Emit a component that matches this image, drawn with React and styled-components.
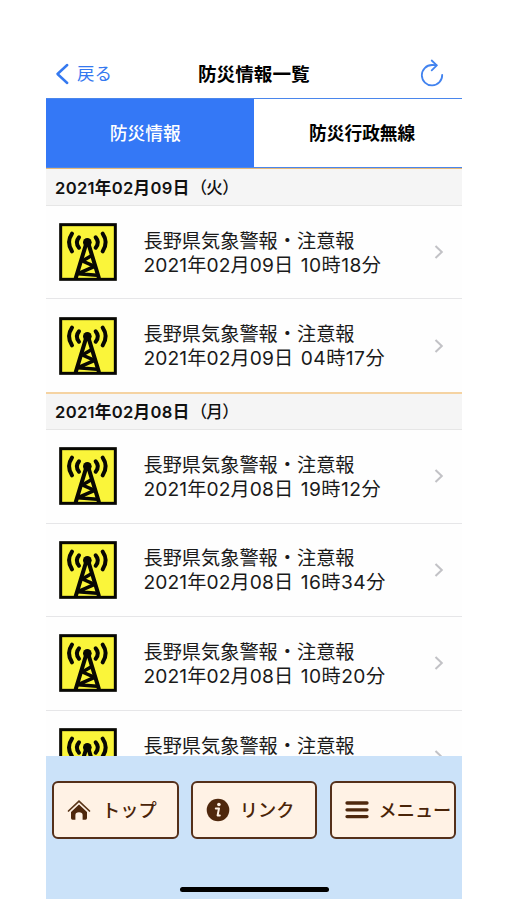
import React from "react";
import styled, { createGlobalStyle, css } from "styled-components";

const GlobalStyle = createGlobalStyle`
  * { box-sizing: border-box; }
  body {
    margin: 0;
    background: #fff;
    font-family: Inter, "Noto Sans CJK JP", sans-serif;
    color: #111;
  }
`;

const Screen = styled.div`
  width: 416px;
  height: 899px;
  margin-left: 46px;
  padding-top: 49px;
  display: flex;
  flex-direction: column;
  overflow: hidden;
  white-space: nowrap;
`;

const NavBar = styled.header`
  flex: none;
  height: 49px;
  padding: 0 18px 0 9px;
  display: grid;
  grid-template-columns: 143px auto 1fr;
  align-items: center;
`;

const BackButton = styled.a`
  display: flex;
  align-items: center;
  gap: 7px;
  color: #3579f0;
  font-size: 17.5px;
  line-height: 24px;
`;

const Title = styled.h1`
  margin: 0;
  font-size: 18.6px;
  line-height: 24px;
  font-weight: 700;
  color: #000;
`;

const ReloadButton = styled.a`
  display: flex;
  justify-content: flex-end;
  padding-bottom: 2px;
`;

const Tabs = styled.nav`
  flex: none;
  height: 70px;
  display: flex;
  border: solid #4a86ec;
  border-width: 1px 0;
`;

const Tab = styled.a`
  width: ${(p) => (p.$active ? 208.4 : 207.6)}px;
  display: flex;
  align-items: center;
  justify-content: center;
  padding-right: ${(p) => (p.$active ? 10 : 0)}px;
  padding-left: ${(p) => (p.$active ? 0 : 8)}px;
  padding-bottom: 2px;
  font-size: 17.7px;
  font-weight: 700;
  ${(p) =>
    p.$active
      ? css`
          background: #3478f6;
          color: #fff;
          font-weight: 500;
        `
      : css`
          color: #000;
        `}
`;

const List = styled.main`
  flex: 1;
  min-height: 0;
  overflow: hidden;
`;

const DayHeading = styled.h2`
  margin: 0;
  height: 38px;
  padding: 0 0 1px 9px;
  display: flex;
  align-items: center;
  border-top: ${(p) => (p.$first ? 1 : 2)}px solid ${(p) => (p.$first ? "#e5b878" : "#f5d3a2")};
  border-bottom: 1px solid #e6e6e6;
  background: #f5f5f5;
  font-size: 16.6px;
  font-weight: 600;
  letter-spacing: 0.3px;
`;

const Weekday = styled.span`
  font-weight: 500;
  letter-spacing: -0.8px;
  margin-left: 1px;
`;

const Row = styled.a`
  height: ${(p) => p.$height}px;
  padding: 0 18px 0 13px;
  display: flex;
  align-items: center;
  border-bottom: ${(p) => (p.$last ? 0 : 1)}px solid #e6e6e8;
  background: #fefefe;
`;

const RowText = styled.div`
  flex: 1;
  margin-left: 26.5px;
  padding-top: 1px;
  font-size: 19.2px;
  line-height: 24px;
  color: #1a1a1a;
`;

const DateLine = styled.div`
  display: flex;
  gap: 7.5px;
  letter-spacing: 0.1px;
`;

const Time = styled.span`
  letter-spacing: 0.45px;
`;

const Footer = styled.footer`
  flex: none;
  height: 143.5px;
  padding: 25px 6px 7px;
  display: flex;
  flex-direction: column;
  align-items: center;
  justify-content: space-between;
  background: #cbe2f9;
`;

const FooterButtons = styled.div`
  width: 100%;
  display: flex;
  justify-content: space-between;
`;

const FooterButton = styled.a`
  width: 126.5px;
  height: 58px;
  padding-left: 13px;
  display: flex;
  align-items: center;
  gap: ${(p) => p.$gap}px;
  border: 2px solid #55301a;
  border-radius: 6px;
  background: #fff2e5;
  color: #4a2408;
  font-size: 18.2px;
  font-weight: 500;

  svg {
    flex: none;
  }
`;

const ButtonLabel = styled.span`
  padding-bottom: 2px;
`;

const HomeIndicator = styled.div`
  width: 149px;
  height: 5px;
  border-radius: 3px;
  background: #000;
`;

const BackIcon = () => (
  <svg width="15" height="22" viewBox="0 0 15 22" fill="none" stroke="#3579f0" strokeWidth="2.5" strokeLinecap="round" strokeLinejoin="round">
    <path d="M12.2 2 L2.5 11 L12.2 20" />
  </svg>
);

const ReloadIcon = () => (
  <svg width="24" height="28" viewBox="0 0 24 28" fill="none" stroke="#4283ef" strokeWidth="1.8" strokeLinecap="round" strokeLinejoin="round">
    <path d="M22.2 15.8 A10.2 10.2 0 1 1 12 6 L16.5 6.2" />
    <path d="M11.7 1.5 L16.8 6.3 L11.7 11.3" />
  </svg>
);

const AntennaIcon = () => (
  <svg width="58" height="58" viewBox="0 0 174 174" fill="none" stroke="#080803">
    <rect x="5" y="5" width="164" height="164" fill="#faf53a" strokeWidth="9" />
    <circle cx="85" cy="58" r="13" fill="#080803" stroke="none" />
    <g strokeWidth="12" strokeLinecap="round">
      <path d="M39 32 Q21 58 39 85" />
      <path d="M60 43 Q47 58 60 74" />
      <path d="M110 43 Q123 58 110 74" />
      <path d="M131 32 Q149 58 131 85" />
    </g>
    <g strokeWidth="12" strokeLinejoin="round">
      <path d="M50 166 L81 64 H89 L120 166" />
      <path d="M97 98 L70 114 L107 130 L57 152 L114 157" strokeWidth="10.5" />
    </g>
  </svg>
);

const ChevronIcon = () => (
  <svg width="10" height="16" viewBox="0 0 10 16" fill="none" stroke="#c2c2c6" strokeWidth="2">
    <path d="M1.5 2 L7.8 8 L1.5 14" />
  </svg>
);

const HomeIcon = () => (
  <svg width="24" height="22" viewBox="0 0 24 22" fill="none">
    <path d="M1.5 12 L12 2.2 L22.5 12" stroke="#5a3518" strokeWidth="1.7" strokeLinecap="round" />
    <path d="M4 13 L12 5.6 L20 13 V19 Q20 20.8 18.5 20.8 H15.6 V16 Q15.6 13.2 12 13.2 Q8.4 13.2 8.4 16 V20.8 H5.5 Q4 20.8 4 19 Z" fill="#4f280d" />
  </svg>
);

const InfoIcon = () => (
  <svg width="24" height="24" viewBox="0 0 24 24">
    <circle cx="12" cy="12" r="11.3" fill="#4f280d" />
    <circle cx="12.9" cy="6.5" r="1.8" fill="#fff2e5" />
    <path d="M9.8 10.4 H13 L11.6 17.4 H13.8" fill="none" stroke="#fff2e5" strokeWidth="2" strokeLinecap="round" strokeLinejoin="round" />
  </svg>
);

const MenuIcon = () => (
  <svg width="24" height="20" viewBox="0 0 24 20" stroke="#4f280d" strokeWidth="3.3" strokeLinecap="round">
    <path d="M2 3 H22 M2 9.8 H22 M2 16.6 H22" />
  </svg>
);

const days = [
  {
    label: "2021年02月09日",
    weekday: "（火）",
    alerts: [
      { date: "2021年02月09日", time: "10時18分", height: 93 },
      { date: "2021年02月09日", time: "04時17分", height: 93 },
    ],
  },
  {
    label: "2021年02月08日",
    weekday: "（月）",
    alerts: [
      { date: "2021年02月08日", time: "19時12分", height: 93.5 },
      { date: "2021年02月08日", time: "16時34分", height: 93.5 },
      { date: "2021年02月08日", time: "10時20分", height: 93.5 },
      { date: "2021年02月08日", time: "", height: 93.5 },
    ],
  },
];

const menu = [
  { label: "トップ", Icon: HomeIcon, gap: 11 },
  { label: "リンク", Icon: InfoIcon, gap: 10 },
  { label: "メニュー", Icon: MenuIcon, gap: 10 },
];

export default function App() {
  return (
    <>
      <GlobalStyle />
      <Screen>
        <NavBar>
          <BackButton>
            <BackIcon />
            戻る
          </BackButton>
          <Title>防災情報一覧</Title>
          <ReloadButton>
            <ReloadIcon />
          </ReloadButton>
        </NavBar>
        <Tabs>
          <Tab $active>防災情報</Tab>
          <Tab>防災行政無線</Tab>
        </Tabs>
        <List>
          {days.map((day, d) => (
            <section key={day.label}>
              <DayHeading $first={d === 0}>
                {day.label}
                <Weekday>{day.weekday}</Weekday>
              </DayHeading>
              {day.alerts.map((alert, i) => (
                <Row key={i} $height={alert.height} $last={i === day.alerts.length - 1}>
                  <AntennaIcon />
                  <RowText>
                    <div>長野県気象警報・注意報</div>
                    <DateLine>
                      {alert.time ? (
                        <>
                          <span>{alert.date}</span>
                          <Time>{alert.time}</Time>
                        </>
                      ) : (
                        "\u00a0"
                      )}
                    </DateLine>
                  </RowText>
                  <ChevronIcon />
                </Row>
              ))}
            </section>
          ))}
        </List>
        <Footer>
          <FooterButtons>
            {menu.map(({ label, Icon, gap }) => (
              <FooterButton key={label} $gap={gap}>
                <Icon />
                <ButtonLabel>{label}</ButtonLabel>
              </FooterButton>
            ))}
          </FooterButtons>
          <HomeIndicator />
        </Footer>
      </Screen>
    </>
  );
}
